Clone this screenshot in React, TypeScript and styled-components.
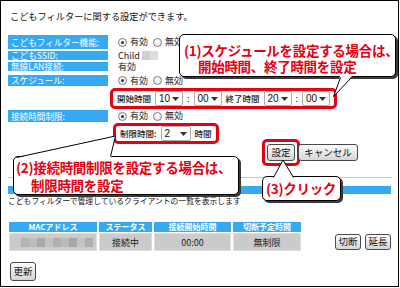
import React from 'react';
import styled, { createGlobalStyle } from 'styled-components';

const BLUE = '#35a9f4';
const RED = '#e60012';

const GlobalStyle = createGlobalStyle`
    body {
        margin: 0;
        background: #fff;
        font-family: "Noto Sans CJK JP", "Liberation Sans", sans-serif;
        color: #222;
    }
`;

type SelectProps = { value: string; width?: number };

const Select = ({ value, width = 28 }: SelectProps) => (
    <SelectBox $w={width}>
        <span>{value}</span>
        <svg width="7" height="4" viewBox="0 0 7 4"><polygon points="0,0 7,0 3.5,4" fill="#333" /></svg>
    </SelectBox>
);

const RadioPair = ({ on }: { on: boolean }) => (
    <RadioGroup>
        <Radio $checked={on} /><RadioText>有効</RadioText>
        <Radio $checked={!on} /><RadioText>無効</RadioText>
    </RadioGroup>
);

const blurShades = ['#c9c9c9', '#b4b4b4', '#bdbdbd', '#a9a9a9', '#c2c2c2', '#b0b0b0', '#bababa', '#a6a6a6', '#c4c4c4', '#afafaf'];

export default function App() {
    return (
        <>
            <GlobalStyle />
            <Frame>
                <Title>こどもフィルターに関する設定ができます。</Title>

                <FormRow $h={14} $gap={2}>
                    <Label>こどもフィルター機能:</Label>
                    <Value><RadioPair on /></Value>
                </FormRow>
                <FormRow $h={9} $gap={2}>
                    <Label>こどもSSID:</Label>
                    <Value>
                        Child
                        <BlurBlock $c="#cfcfcf" />
                        <BlurBlock $c="#dedede" />
                    </Value>
                </FormRow>
                <FormRow $h={9} $gap={4}>
                    <Label>無線LAN接続:</Label>
                    <Value>有効</Value>
                </FormRow>
                <FormRow $h={11} $gap={0}>
                    <Label>スケジュール:</Label>
                    <Value><RadioPair on /></Value>
                </FormRow>

                <Highlight $ml={102} $mt={2} $mb={1}>
                    <FieldText>開始時間</FieldText>
                    <Select value="10" />
                    <Colon>:</Colon>
                    <Select value="00" />
                    <FieldText>終了時間</FieldText>
                    <Select value="20" />
                    <Colon>:</Colon>
                    <Select value="00" />
                </Highlight>

                <FormRow $h={12} $gap={1}>
                    <Label>接続時間制限:</Label>
                    <Value><RadioPair on /></Value>
                </FormRow>

                <Highlight $ml={105} $mt={0} $mb={0}>
                    <FieldText>制限時間:</FieldText>
                    <Select value="2" width={30} />
                    <FieldText>時間</FieldText>
                </Highlight>

                <ButtonRow>
                    <ButtonMark>
                        <Button $w={28} $h={17}>設定</Button>
                    </ButtonMark>
                    <Button $w={60} $h={17}>キャンセル</Button>
                </ButtonRow>

                <Rule />
                <SectionBar />
                <Note>こどもフィルターで管理しているクライアントの一覧を表示します</Note>

                <ListArea>
                    <ClientGrid>
                        <HeadCell>MACアドレス</HeadCell>
                        <HeadCell>ステータス</HeadCell>
                        <HeadCell>接続開始時間</HeadCell>
                        <HeadCell>切断予定時間</HeadCell>
                        <Cell>
                            <BlurStrip>
                                {blurShades.map((c, i) => <BlurBlock key={i} $c={c} />)}
                            </BlurStrip>
                        </Cell>
                        <Cell>接続中</Cell>
                        <Cell>00:00</Cell>
                        <Cell>無制限</Cell>
                    </ClientGrid>
                    <RowButtons>
                        <Button $w={26} $h={16}>切断</Button>
                        <Button $w={26} $h={16}>延長</Button>
                    </RowButtons>
                </ListArea>

                <RefreshRow>
                    <Button $w={26} $h={19}>更新</Button>
                </RefreshRow>

                <Callout $left={178} $top={33} $w={217} $h={43} $pt={7} $pl={4}>
                    <CalloutLine $indent={0}>(1)スケジュールを設定する場合は、</CalloutLine>
                    <CalloutLine $indent={14}>開始時間、終了時間を設定</CalloutLine>
                    <Tail style={{ left: 150, top: 38 }} width="26" height="26">
                        <polygon points="10,3 22,3 3.5,23.5" fill="#fff" />
                        <polyline points="10.5,4.5 3.5,23.5 21.5,4.5" fill="none" stroke="#000" strokeWidth="1" />
                    </Tail>
                </Callout>

                <Callout $left={12} $top={155} $w={226} $h={39} $pt={1} $pl={2}>
                    <CalloutLine $indent={0} $lh={18}>(2)接続時間制限を設定する場合は、</CalloutLine>
                    <CalloutLine $indent={15} $lh={18}>制限時間を設定</CalloutLine>
                    <Tail style={{ left: 0, top: -22 }} width="110" height="24">
                        <polygon points="4,22.5 97,22.5 101.5,1" fill="#fff" />
                        <polyline points="2.5,22.5 101.5,1 96.5,21.5" fill="none" stroke="#000" strokeWidth="1" />
                    </Tail>
                </Callout>

                <Callout $left={261} $top={175} $w={79} $h={25} $pt={0} $pl={3}>
                    <CalloutLine $indent={0} $lh={23}>(3)クリック</CalloutLine>
                    <Tail style={{ left: 5, top: -20 }} width="30" height="22">
                        <polygon points="5,21.5 26,21.5 15,3" fill="#fff" />
                        <polyline points="5.5,20.5 15,3 25.5,20.5" fill="none" stroke="#000" strokeWidth="1" />
                    </Tail>
                </Callout>
            </Frame>
        </>
    );
}

const Frame = styled.div`
    position: relative;
    width: 399px;
    height: 287px;
    box-sizing: border-box;
    border: 1px solid #000;
    padding: 0 7px;
    overflow: hidden;
    background: #fff;
`;

const Title = styled.div`
    padding: 9px 0 0 2px;
    height: 12px;
    font-size: 9.2px;
    line-height: 12px;
    color: #111;
    margin-bottom: 13px;
`;

const FormRow = styled.div<{ $h: number; $gap: number }>`
    display: flex;
    align-items: stretch;
    height: ${p => p.$h}px;
    line-height: ${p => p.$h}px;
    margin-bottom: ${p => p.$gap}px;
`;

const Label = styled.div`
    width: 100px;
    box-sizing: border-box;
    padding-left: 3px;
    background: ${BLUE};
    color: #fff;
    font-size: 8.6px;
    white-space: nowrap;
`;

const Value = styled.div`
    display: flex;
    align-items: center;
    padding-left: 10px;
    font-size: 9px;
    color: #222;
`;

const RadioGroup = styled.div`
    display: flex;
    align-items: center;
`;

const Radio = styled.span<{ $checked: boolean }>`
    position: relative;
    width: 9px;
    height: 9px;
    box-sizing: border-box;
    border: 1px solid #7d7d7d;
    border-radius: 50%;
    background: radial-gradient(circle at 40% 35%, #fff 0%, #e2e2e2 100%);

    &::after {
        content: '';
        display: ${p => (p.$checked ? 'block' : 'none')};
        position: absolute;
        left: 2px;
        top: 2px;
        width: 3px;
        height: 3px;
        border-radius: 50%;
        background: #1c2f6e;
    }
`;

const RadioText = styled.span`
    font-size: 9px;
    margin: 0 5px 0 3px;
`;

const BlurBlock = styled.span<{ $c: string }>`
    display: inline-block;
    width: 8px;
    height: 9px;
    background: ${p => p.$c};
    &:first-of-type {
        margin-left: 2px;
    }
`;

const Highlight = styled.div<{ $ml: number; $mt: number; $mb: number }>`
    display: flex;
    align-items: center;
    gap: 4px;
    width: fit-content;
    height: 21px;
    box-sizing: border-box;
    margin: ${p => p.$mt}px 0 ${p => p.$mb}px ${p => p.$ml}px;
    padding: 0 4px;
    border: 3px solid ${RED};
    border-radius: 5px;
    background: #fff;
    line-height: 1;
`;

const FieldText = styled.span`
    font-size: 8.5px;
    font-weight: 500;
    color: #222;
    white-space: nowrap;
`;

const Colon = styled.span`
    font-size: 9px;
    color: #333;
`;

const SelectBox = styled.div<{ $w: number }>`
    display: flex;
    align-items: center;
    justify-content: space-between;
    width: ${p => p.$w}px;
    height: 15px;
    box-sizing: border-box;
    padding: 0 3px 0 3px;
    border: 1px solid #a9b0b8;
    border-radius: 2px;
    background: #fff;
    font-family: "Liberation Sans", sans-serif;
    font-size: 10px;
    color: #111;
`;

const ButtonRow = styled.div`
    display: flex;
    align-items: center;
    height: 27px;
    margin: -5px 0 0 254px;
`;

const ButtonMark = styled.div`
    display: flex;
    padding: 2px;
    border: 3px solid ${RED};
    border-radius: 5px;
    margin-right: -2px;
`;

const Button = styled.div<{ $w: number; $h: number }>`
    display: flex;
    align-items: center;
    justify-content: center;
    width: ${p => p.$w}px;
    height: ${p => p.$h}px;
    box-sizing: border-box;
    border: 1px solid #4a4a4a;
    border-radius: 3px;
    background: linear-gradient(#fbfbfb, #d6d6d6);
    font-size: 9.5px;
    line-height: 1;
    color: #111;
    white-space: nowrap;
`;

const Rule = styled.div`
    height: 1px;
    margin-top: 11px;
    background: #c8c8c8;
`;

const SectionBar = styled.div`
    height: 8px;
    margin-top: 8px;
    background: ${BLUE};
`;

const Note = styled.div`
    margin-top: 2px;
    height: 10px;
    font-size: 7.8px;
    line-height: 10px;
    color: #111;
    white-space: nowrap;
`;

const ListArea = styled.div`
    display: flex;
    align-items: flex-end;
    margin: 16px 0 0 1px;
`;

const ClientGrid = styled.div`
    display: grid;
    grid-template-columns: 88px 53px 77px 68px;
    grid-template-rows: 10px 18px;
    column-gap: 2px;
    row-gap: 1px;
`;

const HeadCell = styled.div`
    display: flex;
    align-items: center;
    justify-content: center;
    background: ${BLUE};
    color: #fff;
    font-size: 8px;
    font-weight: 700;
    line-height: 10px;
`;

const Cell = styled.div`
    display: flex;
    align-items: center;
    justify-content: center;
    background: #cbcbcb;
    border: 1px solid #dedede;
    font-size: 9px;
    color: #222;
`;

const BlurStrip = styled.div`
    display: flex;
    & > span:first-of-type {
        margin-left: 0;
    }
`;

const RowButtons = styled.div`
    display: flex;
    gap: 4px;
    margin-left: auto;
    margin-bottom: 1px;
`;

const RefreshRow = styled.div`
    display: flex;
    margin: 11px 0 0 2px;
`;

const Callout = styled.div<{ $left: number; $top: number; $w: number; $h: number; $pt: number; $pl: number }>`
    position: absolute;
    left: ${p => p.$left}px;
    top: ${p => p.$top}px;
    width: ${p => p.$w}px;
    height: ${p => p.$h}px;
    box-sizing: border-box;
    padding: ${p => p.$pt}px 0 0 ${p => p.$pl}px;
    border: 1px solid #000;
    border-radius: 5px;
    background: #fff;
    box-shadow: 2px 2px 0 #3a3a3a;
    z-index: 2;
`;

const CalloutLine = styled.div<{ $indent: number; $lh?: number }>`
    padding-left: ${p => p.$indent}px;
    color: ${RED};
    font-size: 13.5px;
    font-weight: 700;
    line-height: ${p => p.$lh ?? 16}px;
    white-space: nowrap;
    letter-spacing: -0.3px;
`;

const Tail = styled.svg`
    position: absolute;
    overflow: visible;
`;
